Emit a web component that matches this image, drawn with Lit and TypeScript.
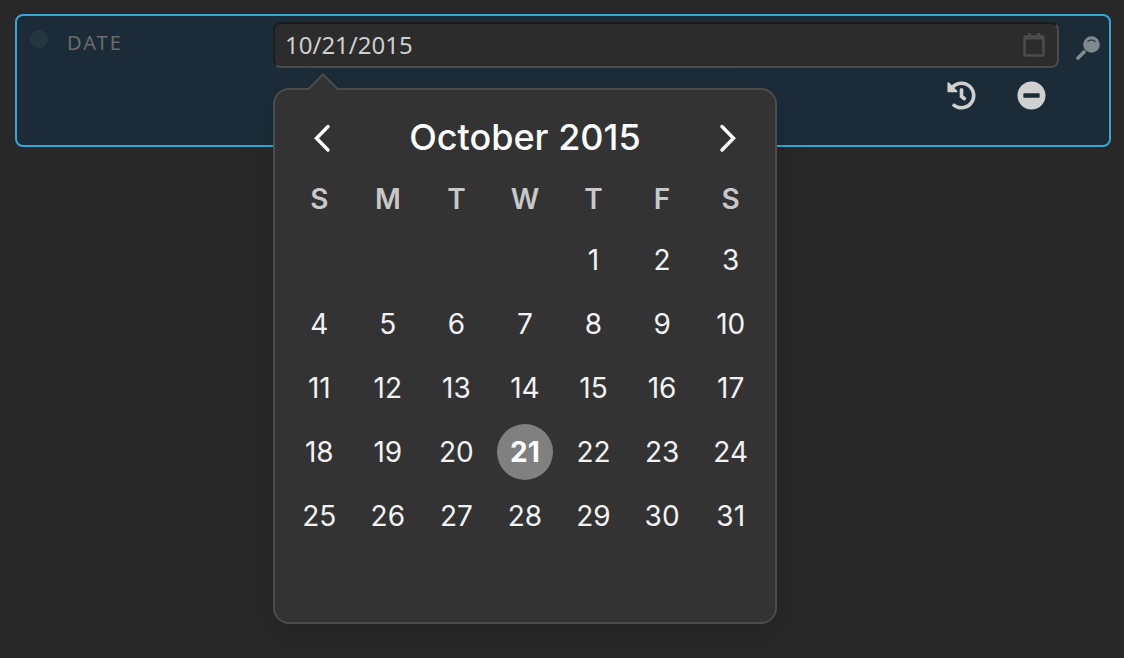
import { LitElement, html, css } from "lit";
import { customElement, state } from "lit/decorators.js";

const MONTHS = [
  "January", "February", "March", "April", "May", "June", "July",
  "August", "September", "October", "November", "December",
];
const WEEKDAYS = ["Sunday", "Monday", "Tuesday", "Wednesday", "Thursday", "Friday", "Saturday"];

@customElement("month-calendar")
export class MonthCalendar extends LitElement {
  @state() private year = 2015;
  @state() private month = 9;
  @state() private selected = new Date(2015, 9, 21);

  static styles = css`
    :host {
      display: block;
      font-family: Inter, "Liberation Sans", sans-serif;
      color: #f2f2f2;
    }
    button {
      font: inherit;
      color: inherit;
      background: none;
      border: 0;
      padding: 0;
      cursor: pointer;
    }
    .head {
      display: flex;
      align-items: center;
      justify-content: space-between;
      height: 76px;
      padding: 0 9px;
    }
    .title {
      margin: 0;
      padding-bottom: 2px;
      font-size: 36px;
      font-weight: 500;
      line-height: 44px;
      color: #fbfcff;
    }
    .step {
      display: grid;
      place-items: center;
      width: 56px;
      height: 56px;
    }
    .step svg {
      width: 20px;
      height: 30px;
      fill: none;
      stroke: #fff;
      stroke-width: 3.4;
      stroke-linecap: round;
      stroke-linejoin: miter;
    }
    .days {
      width: 100%;
      table-layout: fixed;
      border-collapse: collapse;
      font-size: 28px;
      line-height: 34px;
      text-align: center;
    }
    th {
      height: 46px;
      padding: 0 0 6px;
      font-weight: 600;
      color: #c8c8c8;
    }
    td {
      height: 64px;
      padding: 0;
    }
    .day {
      width: 56px;
      height: 56px;
      border-radius: 50%;
      vertical-align: middle;
    }
    .chosen {
      background: #808080;
      color: #fff;
      font-weight: 700;
    }
  `;

  private shift(by: number) {
    const next = new Date(this.year, this.month + by, 1);
    this.year = next.getFullYear();
    this.month = next.getMonth();
  }

  private isSelected(day: number) {
    return this.selected.getTime() === new Date(this.year, this.month, day).getTime();
  }

  render() {
    const offset = new Date(this.year, this.month, 1).getDay();
    const count = new Date(this.year, this.month + 1, 0).getDate();
    const weeks = Array.from({ length: 6 }, (_, w) =>
      Array.from({ length: 7 }, (_, d) => w * 7 + d - offset + 1));

    return html`
      <div class="head">
        <button class="step" aria-label="Previous month" @click=${() => this.shift(-1)}>
          <svg viewBox="0 0 20 30"><path d="M16 3.500 4.500 15.300 16 27" /></svg>
        </button>
        <h2 class="title">${MONTHS[this.month]} ${this.year}</h2>
        <button class="step" aria-label="Next month" @click=${() => this.shift(1)}>
          <svg viewBox="0 0 20 30"><path d="M4 3.500 15.500 15.300 4 27" /></svg>
        </button>
      </div>
      <table class="days">
        <thead>
          <tr>${WEEKDAYS.map((d) => html`<th scope="col" abbr=${d}>${d[0]}</th>`)}</tr>
        </thead>
        <tbody>
          ${weeks.map((week) => html`<tr>${week.map((day) => html`<td>${
            day > 0 && day <= count
              ? html`<button
                  class=${this.isSelected(day) ? "day chosen" : "day"}
                  aria-pressed=${this.isSelected(day)}
                  @click=${() => (this.selected = new Date(this.year, this.month, day))}
                >${day}</button>`
              : null
          }</td>`)}</tr>`)}
        </tbody>
      </table>
    `;
  }
}

@customElement("app-root")
export class AppRoot extends LitElement {
  static styles = css`
    :host {
      display: block;
      box-sizing: border-box;
      min-height: 100vh;
      padding: 14px 13px 32px 15px;
      background: #282828;
      font-family: "Noto Sans", "Open Sans", sans-serif;
    }
    .row {
      display: grid;
      grid-template-columns: 256px 1fr 50px;
      padding: 6px 0 35px;
      border: 2px solid #36a6d3;
      border-radius: 8px;
      background: #1b2c38;
    }
    .name {
      display: flex;
      align-items: flex-start;
      gap: 19px;
      padding: 8px 0 0 13px;
    }
    .dot {
      width: 18px;
      height: 18px;
      border-radius: 50%;
      background: #263640;
    }
    .label {
      font-size: 20px;
      line-height: 26px;
      letter-spacing: 2px;
      color: #6b6b6b;
    }
    .field {
      position: relative;
    }
    .box {
      display: flex;
      align-items: center;
      box-sizing: border-box;
      height: 46px;
      padding: 0 12px 0 10px;
      border: 2px solid;
      border-color: #1c1c1c #4b4b4b #4b4b4b #1c1c1c;
      border-radius: 8px;
      background: #2c2c2c;
    }
    .date {
      flex: 1;
      min-width: 0;
      padding: 0;
      border: 0;
      outline: 0;
      background: none;
      font-family: inherit;
      font-size: 24px;
      line-height: 32px;
      color: #cecece;
    }
    button {
      display: block;
      border: 0;
      padding: 0;
      background: none;
      cursor: pointer;
    }
    svg {
      display: block;
    }
    .cal {
      width: 22px;
      height: 26px;
      color: #4c4c4c;
    }
    .find {
      justify-self: end;
      align-self: start;
      padding: 14px 9px 0 0;
      color: #7f898e;
    }
    .find svg {
      width: 24px;
      height: 24px;
    }
    .actions {
      display: flex;
      justify-content: flex-end;
      gap: 41px;
      padding: 13px 13px 0 0;
      color: #d0d0d0;
    }
    .actions button {
      color: inherit;
    }
    .actions svg {
      width: 29px;
      height: 29px;
      fill: currentColor;
    }
    .popover {
      position: absolute;
      top: 66px;
      left: 0;
      box-sizing: border-box;
      width: 504px;
      padding: 10px;
      border: 2px solid #4c4c4c;
      border-radius: 16px;
      background: #333;
      box-shadow: 0 10px 30px rgba(0, 0, 0, 0.12);
    }
    .arrow {
      position: absolute;
      top: -17px;
      left: 32px;
      width: 32px;
      height: 18px;
    }
  `;

  render() {
    return html`
      <div class="row">
        <div class="name">
          <span class="dot"></span>
          <label class="label" for="date">DATE</label>
        </div>
        <div class="field">
          <div class="box">
            <input class="date" id="date" type="text" value="10/21/2015" />
            <button class="cal" aria-label="Toggle calendar">
              <svg viewBox="0 0 22 26" width="22" height="26" fill="none" stroke="currentColor">
                <rect x="1.500" y="4.500" width="19" height="19" rx="1.500" stroke-width="2.500" />
                <path d="M1 5.500h20" stroke-width="4" />
                <path d="M6.500 1v4M15.500 1v4" stroke-width="3" />
              </svg>
            </button>
          </div>
          <div class="actions">
            <button aria-label="History">
              <svg viewBox="0 0 512 512">
                <path d="M504 255.531c.253 136.640-111.180 248.372-247.820 248.468-59.015.042-113.223-20.530-155.822-54.911-11.077-8.940-11.905-25.541-1.839-35.607l11.267-11.267c8.609-8.609 22.353-9.551 31.891-1.984C173.062 425.135 212.781 440 256 440c101.705 0 184-82.311 184-184 0-101.705-82.311-184-184-184-48.814 0-93.149 18.969-126.068 49.932l50.754 50.754c10.080 10.080 2.941 27.314-11.313 27.314H24c-8.837 0-16-7.163-16-16V38.627c0-14.254 17.234-21.393 27.314-11.314l49.372 49.372C129.209 34.136 189.552 8 256 8c136.810 0 247.747 110.780 248 247.531zm-180.912 78.784l9.823-12.630c8.138-10.463 6.253-25.542-4.210-33.679L288 256.349V152c0-13.255-10.745-24-24-24h-16c-13.255 0-24 10.745-24 24v135.651l65.409 50.874c10.463 8.137 25.541 6.253 33.679-4.210z" />
              </svg>
            </button>
            <button aria-label="Remove">
              <svg viewBox="0 0 512 512">
                <path fill-rule="evenodd" d="M256 8C119 8 8 119 8 256s111 248 248 248 248-111 248-248S393 8 256 8zM124 296c-6.600 0-12-5.400-12-12v-56c0-6.600 5.400-12 12-12h264c6.600 0 12 5.400 12 12v56c0 6.600-5.400 12-12 12H124z" />
              </svg>
            </button>
          </div>
          <div class="popover" role="dialog" aria-label="Choose date">
            <svg class="arrow" viewBox="0 0 32 18">
              <path d="M1 18 16 1.500 31 18z" fill="#333" />
              <path d="M1 16.500 16 1.500 31 16.500" fill="none" stroke="#4c4c4c" stroke-width="2" />
            </svg>
            <month-calendar></month-calendar>
          </div>
        </div>
        <button class="find" aria-label="Look up">
          <svg viewBox="0 0 24 24">
            <circle cx="15.500" cy="8.500" r="8.300" fill="currentColor" />
            <path d="M2 22 8 16" fill="none" stroke="currentColor" stroke-width="3.600" stroke-linecap="round" />
            <path d="M12 5.300q3.500-2.600 7 0" fill="none" stroke="#1b2c38" stroke-width="1.200" stroke-linecap="round" />
          </svg>
        </button>
      </div>
    `;
  }
}
